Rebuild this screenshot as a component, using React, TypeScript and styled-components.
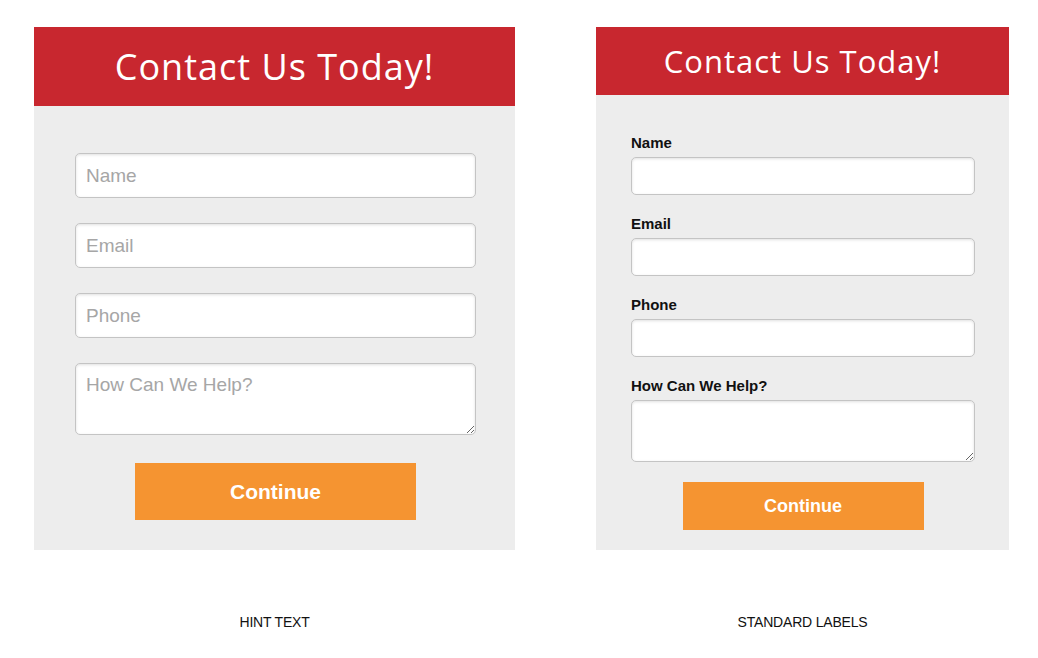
import React from 'react';
import styled, {createGlobalStyle} from "styled-components";

const GlobalStyle = createGlobalStyle`
  body {
    margin: 0;
    background: #ffffff;
    font-family: "Liberation Sans", Arial, sans-serif;
  }
`

const fields = ["Name", "Email", "Phone"]

export default function App() {
    return (
        <>
            <GlobalStyle/>
            <Page>
                <Column width={481}>
                    <Card>
                        <Header height={79} size={36}>Contact Us Today!</Header>
                        <HintBody>
                            {fields.map(f => (
                                <BigInput key={f} placeholder={f}/>
                            ))}
                            <BigArea placeholder="How Can We Help?"/>
                            <Button width={281} height={57} size={21} offset={3}>Continue</Button>
                        </HintBody>
                    </Card>
                    <Caption>HINT TEXT</Caption>
                </Column>

                <Column width={413}>
                    <Card>
                        <Header height={68} size={31}>Contact Us Today!</Header>
                        <LabelBody>
                            {fields.map(f => (
                                <Field key={f}>
                                    <Label>{f}</Label>
                                    <SmallInput/>
                                </Field>
                            ))}
                            <Field>
                                <Label>How Can We Help?</Label>
                                <SmallArea/>
                            </Field>
                            <Button width={241} height={48} size={18} offset={0}>Continue</Button>
                        </LabelBody>
                    </Card>
                    <Caption>STANDARD LABELS</Caption>
                </Column>
            </Page>
        </>
    );
};

const Page = styled.div`
  display: flex;
  align-items: flex-start;
  gap: 81px;
  padding: 27px 0 0 34px;
`

const Column = styled.div<{ width: number }>`
  width: ${p => p.width}px;
  display: flex;
  flex-direction: column;
  align-items: center;
`

const Card = styled.div`
  width: 100%;
  background: #ededed;
  display: flex;
  flex-direction: column;
`

const Header = styled.h1<{ height: number, size: number }>`
  margin: 0;
  height: ${p => p.height}px;
  background: #c8272f;
  color: #ffffff;
  font-family: "Open Sans", sans-serif;
  font-weight: 500;
  font-size: ${p => p.size}px;
  letter-spacing: 1px;
  display: flex;
  align-items: center;
  justify-content: center;
`

const HintBody = styled.div`
  display: flex;
  flex-direction: column;
  padding: 47px 39px 30px 41px;
  gap: 25px;
`

const LabelBody = styled.div`
  display: flex;
  flex-direction: column;
  padding: 39px 34px 20px 35px;
  gap: 20px;
`

const inputBase = `
  box-sizing: border-box;
  width: 100%;
  background: #ffffff;
  border: 1px solid #c4c4c4;
  border-radius: 5px;
  box-shadow: inset 0 1px 3px rgba(0, 0, 0, 0.12);
  font-family: "Liberation Sans", Arial, sans-serif;
  color: #333;
  outline: none;
  &::placeholder {
    color: #a6a6a6;
  }
`

const BigInput = styled.input`
  ${inputBase};
  height: 45px;
  padding: 0 10px;
  font-size: 19px;
`

const BigArea = styled.textarea`
  ${inputBase};
  display: block;
  height: 72px;
  padding: 10px 10px;
  font-size: 19px;
  resize: vertical;
`

const Field = styled.div`
  display: flex;
  flex-direction: column;
  gap: 5px;
`

const Label = styled.label`
  font-size: 15px;
  line-height: 18px;
  font-weight: 700;
  color: #111111;
`

const SmallInput = styled.input`
  ${inputBase};
  height: 38px;
  padding: 0 8px;
  font-size: 15px;
`

const SmallArea = styled.textarea`
  ${inputBase};
  display: block;
  height: 62px;
  padding: 8px;
  font-size: 15px;
  resize: vertical;
`

const Button = styled.button<{ width: number, height: number, size: number, offset: number }>`
  align-self: center;
  width: ${p => p.width}px;
  height: ${p => p.height}px;
  margin-top: ${p => p.offset}px;
  border: none;
  background: #f59431;
  color: #ffffff;
  font-family: "Liberation Sans", Arial, sans-serif;
  font-weight: 700;
  font-size: ${p => p.size}px;
  cursor: pointer;
`

const Caption = styled.div`
  margin-top: 64px;
  font-family: "Liberation Sans", Arial, sans-serif;
  font-size: 14px;
  letter-spacing: -0.2px;
  color: #111;
`
